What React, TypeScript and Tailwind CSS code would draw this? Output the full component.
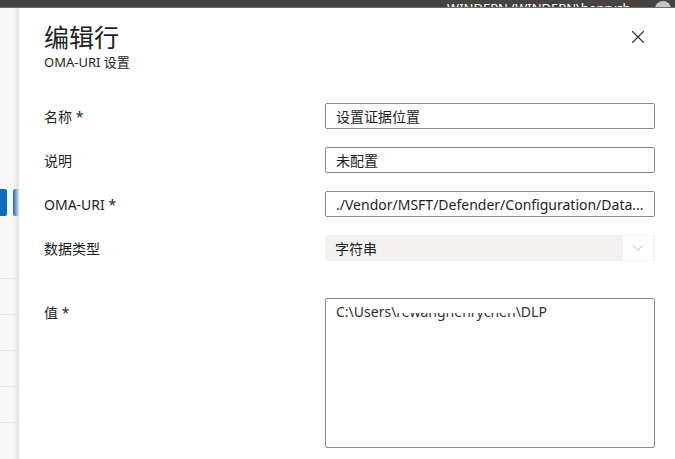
import { X, ChevronDown } from 'lucide-react';

const FONT = { fontFamily: '"Noto Sans", "Open Sans", "Noto Sans CJK SC", sans-serif' };

function Field({ label, children, top }: { label: string; children: React.ReactNode; top?: boolean }) {
  return (
    <div className={`flex ${top ? 'items-start' : 'items-center'}`}>
      <div className={`w-[281px] shrink-0 text-[14px] text-[#201f1e] ${top ? 'pt-[4px]' : ''}`}>{label}</div>
      <div className="flex-1">{children}</div>
    </div>
  );
}

export default function App() {
  return (
    <div className="w-[675px] h-[459px] overflow-hidden bg-white flex flex-col" style={FONT}>
      {/* top bar */}
      <div className="h-[8px] shrink-0 bg-[#464340] border-b border-[#6d6a68] flex items-end justify-end pr-[4px] overflow-hidden">
        <span className="text-[13px] leading-none text-white mb-[-8px] mr-[14px] whitespace-nowrap">WINDEPN (WINDEPN\henrych...</span>
        <span className="w-[16px] h-[16px] rounded-full bg-[#c8c6c4] mb-[-10px] shrink-0" />
      </div>

      <div className="flex flex-1">
        {/* left background strip */}
        <div className="w-[19px] shrink-0 bg-[#f7f7f7] flex flex-col relative">
          <div className="h-[181px]" />
          <div className="flex gap-[6px] h-[27px]">
            <div className="w-[7px] bg-[#0f6cbd] rounded-r-[2px]" />
            <div className="w-[6px] bg-[#0f6cbd] rounded-l-[2px]" />
          </div>
          <div className="h-[62px]" />
          {[0, 1, 2, 3, 4].map(i => (
            <div key={i} className="h-[36px] border-t border-[#e6e6e6]" />
          ))}
          <div className="absolute right-0 top-0 bottom-0 w-[6px] bg-gradient-to-r from-transparent to-[#e2e2e2]" />
        </div>

        {/* panel */}
        <div className="flex-1 pl-[25px] pr-[20px] pt-[12px]">
          <div className="flex justify-between items-start">
            <div>
              <h1 className="text-[25px] leading-[34px] text-[#201f1e]">编辑行</h1>
              <p className="text-[13px] leading-[16px] text-[#201f1e]">OMA-URI 设置</p>
            </div>
            <button className="mt-[6px] mr-[6px] text-[#323130]">
              <X size={22} strokeWidth={1.2} />
            </button>
          </div>

          <div className="mt-[33px] flex flex-col gap-[18px]">
            <Field label="名称 *">
              <div className="h-[26px] border border-[#8a8886] rounded-[2px] px-[10px] flex items-center text-[14px] text-[#201f1e]">设置证据位置</div>
            </Field>
            <Field label="说明">
              <div className="h-[26px] border border-[#8a8886] rounded-[2px] px-[10px] flex items-center text-[14px] text-[#201f1e]">未配置</div>
            </Field>
            <Field label="OMA-URI *">
              <div className="h-[26px] border border-[#8a8886] rounded-[2px] px-[10px] flex items-center text-[14px] text-[#201f1e] whitespace-nowrap overflow-hidden">./Vendor/MSFT/Defender/Configuration/Data...</div>
            </Field>
            <Field label="数据类型">
              <div className="h-[26px] bg-[#f3f2f1] rounded-[2px] pl-[10px] pr-[2px] flex items-center justify-between text-[14px] text-[#201f1e]">
                <span>字符串</span>
                <span className="w-[30px] h-[24px] bg-white flex items-center justify-center text-[#a19f9d]">
                  <ChevronDown size={18} strokeWidth={1} />
                </span>
              </div>
            </Field>
            <div className="h-[19px]" />
          </div>

          <Field label="值 *" top>
            <div className="h-[150px] border border-[#8a8886] rounded-[2px] px-[10px] pt-[3px] text-[14px] leading-[20px] text-[#323130] flex items-start">
              <span>C:\Users\</span>
              <span className="inline-block h-[20px]">
                <span className="block mt-[11px] h-[9px] overflow-hidden">
                  <span className="block mt-[-11px]">rewanghenrychen</span>
                </span>
              </span>
              <span>\DLP</span>
            </div>
          </Field>
        </div>
      </div>
    </div>
  );
}
